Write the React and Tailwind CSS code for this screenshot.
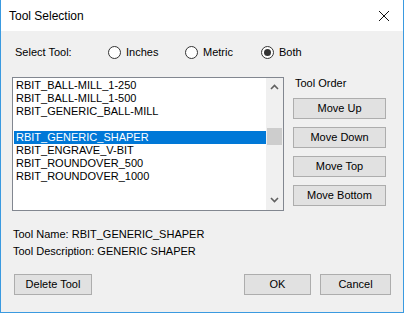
import React from "react";

const font = { fontFamily: '"Liberation Sans", Arial, sans-serif' };

function Radio({ label, checked, width }) {
  return (
    <div className="flex items-center h-[14px]" style={{ width }}>
      <div className="w-[13px] h-[13px] rounded-full border border-[#333333] bg-white flex items-center justify-center">
        {checked && <div className="w-[7px] h-[7px] rounded-full bg-[#333333]" />}
      </div>
      <span className="ml-[5px] text-[11px] leading-[13px] text-black">{label}</span>
    </div>
  );
}

function Btn({ children, className = "" }) {
  return (
    <div
      className={
        "h-[21px] border border-[#adadad] bg-[#e1e1e1] flex items-center justify-center text-[11px] leading-[13px] text-black " +
        className
      }
    >
      {children}
    </div>
  );
}

const items = [
  "RBIT_BALL-MILL_1-250",
  "RBIT_BALL-MILL_1-500",
  "RBIT_GENERIC_BALL-MILL",
  "",
  "RBIT_GENERIC_SHAPER",
  "RBIT_ENGRAVE_V-BIT",
  "RBIT_ROUNDOVER_500",
  "RBIT_ROUNDOVER_1000",
];

export default function App() {
  return (
    <div
      className="w-[404px] h-[313px] flex flex-col border-x border-b border-[#3a9ae0] bg-[#f0f0f0] overflow-hidden"
      style={font}
    >
      {/* Title bar */}
      <div className="h-[31px] bg-white flex items-center justify-between shrink-0">
        <span className="ml-[8px] text-[12px] text-black">Tool Selection</span>
        <svg width="12" height="12" viewBox="0 0 12 12" className="mr-[13px]">
          <path d="M1 1 L11 11 M11 1 L1 11" stroke="#111" strokeWidth="1" />
        </svg>
      </div>

      {/* Body */}
      <div className="flex flex-col pl-[11px]">
        {/* Select tool row */}
        <div className="mt-[14px] flex items-center h-[14px]">
          <span className="ml-[3px] w-[93px] text-[11px] leading-[13px] text-black">Select Tool:</span>
          <Radio label="Inches" width={77} />
          <Radio label="Metric" width={76} />
          <Radio label="Both" checked width={60} />
        </div>

        {/* Main row */}
        <div className="mt-[18px] flex">
          <div className="w-[272px] h-[134px] border border-[#828790] bg-white flex">
            <div className="w-[253px] pl-[1px] pt-[1px] flex flex-col">
              {items.map((it, i) => (
                <div
                  key={i}
                  className={
                    "h-[13px] pl-[2px] text-[11px] leading-[13px] whitespace-nowrap " +
                    (i === 4 ? "bg-[#0078d7] text-white" : "text-black")
                  }
                >
                  {it}
                </div>
              ))}
            </div>
            <div className="w-[17px] bg-[#f0f0f0] flex flex-col items-center relative">
              <svg width="9" height="6" viewBox="0 0 9 6" className="mt-[6px]">
                <path d="M1 5 L4.5 1.5 L8 5" stroke="#606060" strokeWidth="1.6" fill="none" />
              </svg>
              <div className="mt-[38px] w-[15px] h-[17px] bg-[#cdcdcd]" />
              <div className="flex-1" />
              <svg width="9" height="6" viewBox="0 0 9 6" className="mb-[7px]">
                <path d="M1 1 L4.5 4.5 L8 1" stroke="#606060" strokeWidth="1.6" fill="none" />
              </svg>
            </div>
          </div>

          <div className="ml-[9px] flex flex-col">
            <span className="ml-[2px] text-[11px] leading-[13px] text-black">Tool Order</span>
            <div className="mt-[8px] flex flex-col gap-[8px]">
              <Btn className="w-[93px]">Move Up</Btn>
              <Btn className="w-[93px]">Move Down</Btn>
              <Btn className="w-[93px]">Move Top</Btn>
              <Btn className="w-[93px]">Move Bottom</Btn>
            </div>
          </div>
        </div>

        {/* Info */}
        <div className="mt-[17px] ml-[1px] text-[11px] leading-[13px] text-black">
          Tool Name: RBIT_GENERIC_SHAPER
        </div>
        <div className="mt-[4px] ml-[1px] text-[11px] leading-[13px] text-black">
          Tool Description: GENERIC SHAPER
        </div>

        {/* Bottom buttons */}
        <div className="mt-[16px] flex">
          <Btn className="ml-[2px] w-[78px]">Delete Tool</Btn>
          <Btn className="ml-[152px] w-[67px]">OK</Btn>
          <Btn className="ml-[9px] w-[71px]">Cancel</Btn>
        </div>
      </div>
    </div>
  );
}
